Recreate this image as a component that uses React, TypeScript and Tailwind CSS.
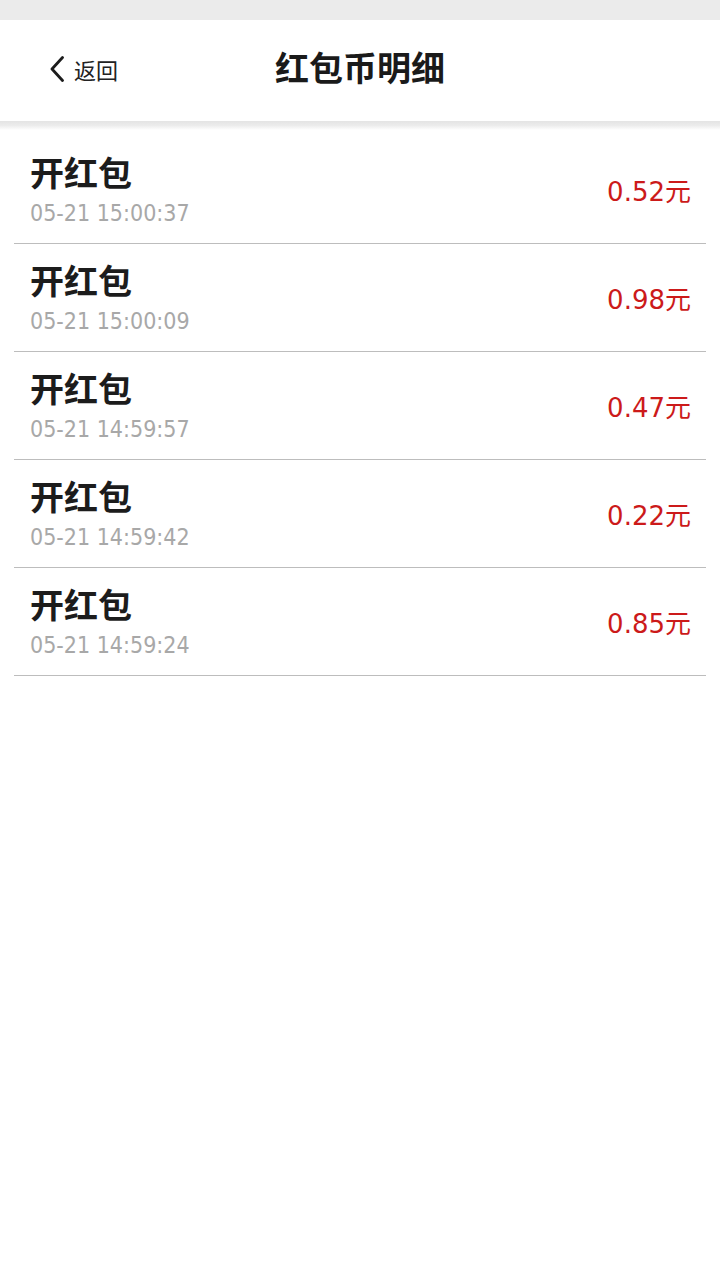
import React from "react";

const rows = [
  { time: "05-21 15:00:37", amount: "0.52" },
  { time: "05-21 15:00:09", amount: "0.98" },
  { time: "05-21 14:59:57", amount: "0.47" },
  { time: "05-21 14:59:42", amount: "0.22" },
  { time: "05-21 14:59:24", amount: "0.85" },
];

const cjk = { fontFamily: '"Noto Sans CJK SC", sans-serif' };

export default function App() {
  return (
    <div className="w-[720px] min-h-[1269px] bg-white" style={cjk}>
      <div className="h-[20px] bg-[#ebebeb]" />
      <div className="relative flex h-[101px] items-center justify-center bg-white pb-[8px]">
        <div className="absolute left-[50px] top-0 flex h-[97px] items-center gap-[10px]">
          <svg width="14" height="26" viewBox="0 0 14 26" fill="none">
            <path d="M12.5 1.5 L2 13 L12.5 24.5" stroke="#1c1c1c" strokeWidth="2.8" strokeLinecap="round" strokeLinejoin="round" />
          </svg>
          <span className="text-[22px] leading-none text-[#222]">返回</span>
        </div>
        <h1 className="text-[34px] font-bold leading-none text-[#1a1a1a]">红包币明细</h1>
      </div>
      <div className="h-[9px] bg-gradient-to-b from-[#e4e4e4] via-[#ececec] to-white" />
      <div className="pt-[6px]">
        {rows.map((r) => (
          <div key={r.time} className="mx-[14px] flex h-[108px] items-center justify-between border-b border-[#bdbdbd] pl-[16px] pr-[15px]">
            <div className="flex flex-col self-start pt-[18px]">
              <div className="text-[34px] font-bold leading-[36px] text-[#1c1c1c]">开红包</div>
              <div
                className="mt-[9px] text-[23px] leading-[28px] text-[#a8a8a8]"
                style={{ fontFamily: '"Liberation Sans Narrow", "DejaVu Sans Condensed", Roboto, sans-serif' }}
              >
                {r.time}
              </div>
            </div>
            <div
              className="pt-[2px] text-[26px] leading-none text-[#cc1a1a]"
              style={{ fontFamily: '"DejaVu Sans", "Noto Sans CJK SC", sans-serif' }}
            >
              {r.amount}
              <span style={cjk}>元</span>
            </div>
          </div>
        ))}
      </div>
    </div>
  );
}
